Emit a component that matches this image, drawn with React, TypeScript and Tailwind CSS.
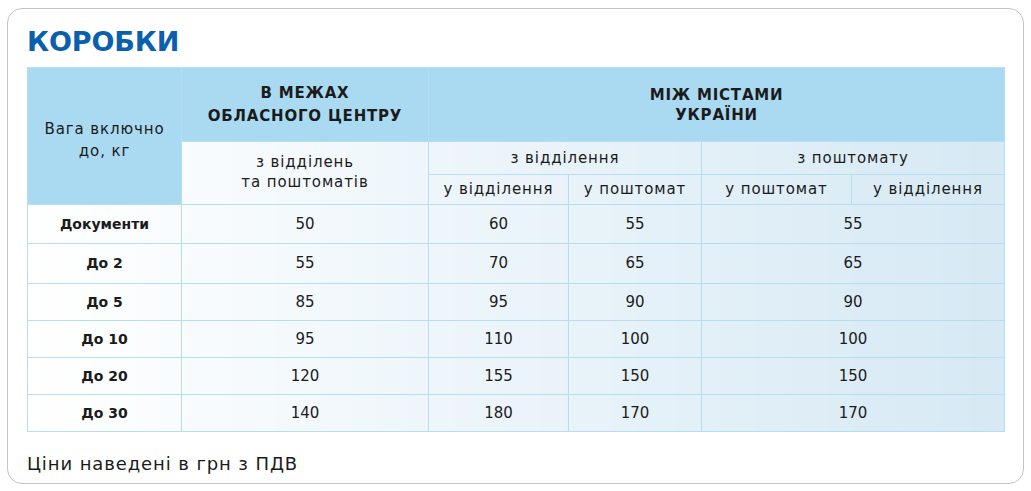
import React from "react";

const rows = [
  { label: "Документи", local: "50", a: "60", b: "55", c: "55", h: "h-[39px]" },
  { label: "До 2", local: "55", a: "70", b: "65", c: "65", h: "h-[40px]" },
  { label: "До 5", local: "85", a: "95", b: "90", c: "90", h: "h-[37px]" },
  { label: "До 10", local: "95", a: "110", b: "100", c: "100", h: "h-[37px]" },
  { label: "До 20", local: "120", a: "155", b: "150", c: "150", h: "h-[37px]" },
  { label: "До 30", local: "140", a: "180", b: "170", c: "170", h: "h-[37px]" },
];

const cell = "border border-[#b6def1] text-center align-middle p-0";
const head = "bg-[#a9daf1]";
const wide = "tracking-[0.9px]";

export default function App() {
  return (
    <div className="w-[1031px] h-[491px] bg-white p-[8px_7px_7px_7px] font-['DejaVu_Sans',sans-serif] text-[#1b1b1b]">
      <div className="h-full rounded-[15px] border border-[#c4c4c4] pl-[19px] pr-[19px] pt-[16px]">
        <h1 className="text-[27px] leading-[34px] font-bold text-[#0b60ae] tracking-[-0.1px]">КОРОБКИ</h1>
        <table className="mt-[8px] w-[977px] border-collapse table-fixed bg-gradient-to-r from-white to-[#d6e9f4] text-[15px]">
          <colgroup>
            <col className="w-[154px]" />
            <col className="w-[247px]" />
            <col className="w-[140px]" />
            <col className="w-[133px]" />
            <col className="w-[150px]" />
            <col className="w-[153px]" />
          </colgroup>
          <thead>
            <tr className="h-[74px]">
              <td rowSpan={3} className={`${cell} ${head} ${wide} leading-[22px] pt-[8px]`}>
                Вага включно
                <br />
                до, кг
              </td>
              <td className={`${cell} ${head} font-semibold uppercase leading-[23px] tracking-[0.8px]`}>
                В межах
                <br />
                обласного центру
              </td>
              <td colSpan={4} className={`${cell} ${head} font-semibold leading-[20px] tracking-[0.8px]`}>
                МІЖ МІСТАМИ
                <br />
                УКРАЇНИ
              </td>
            </tr>
            <tr className="h-[33px]">
              <td rowSpan={2} className={`${cell} ${wide} leading-[20px] pb-[2px]`}>
                з відділень
                <br />
                та поштоматів
              </td>
              <td colSpan={2} className={`${cell} ${wide}`}>
                з відділення
              </td>
              <td colSpan={2} className={`${cell} ${wide}`}>
                з поштомату
              </td>
            </tr>
            <tr className="h-[30px]">
              <td className={`${cell} ${wide}`}>у відділення</td>
              <td className={`${cell} ${wide}`}>у поштомат</td>
              <td className={`${cell} ${wide}`}>у поштомат</td>
              <td className={`${cell} ${wide}`}>у відділення</td>
            </tr>
          </thead>
          <tbody>
            {rows.map((r) => (
              <tr key={r.label} className={r.h}>
                <td className={`${cell} font-bold text-[14px]`}>{r.label}</td>
                <td className={cell}>{r.local}</td>
                <td className={cell}>{r.a}</td>
                <td className={cell}>{r.b}</td>
                <td colSpan={2} className={cell}>
                  {r.c}
                </td>
              </tr>
            ))}
          </tbody>
        </table>
        <p className="mt-[20px] text-[18px] leading-[24px] tracking-[0.9px]">Ціни наведені в грн з ПДВ</p>
      </div>
    </div>
  );
}
